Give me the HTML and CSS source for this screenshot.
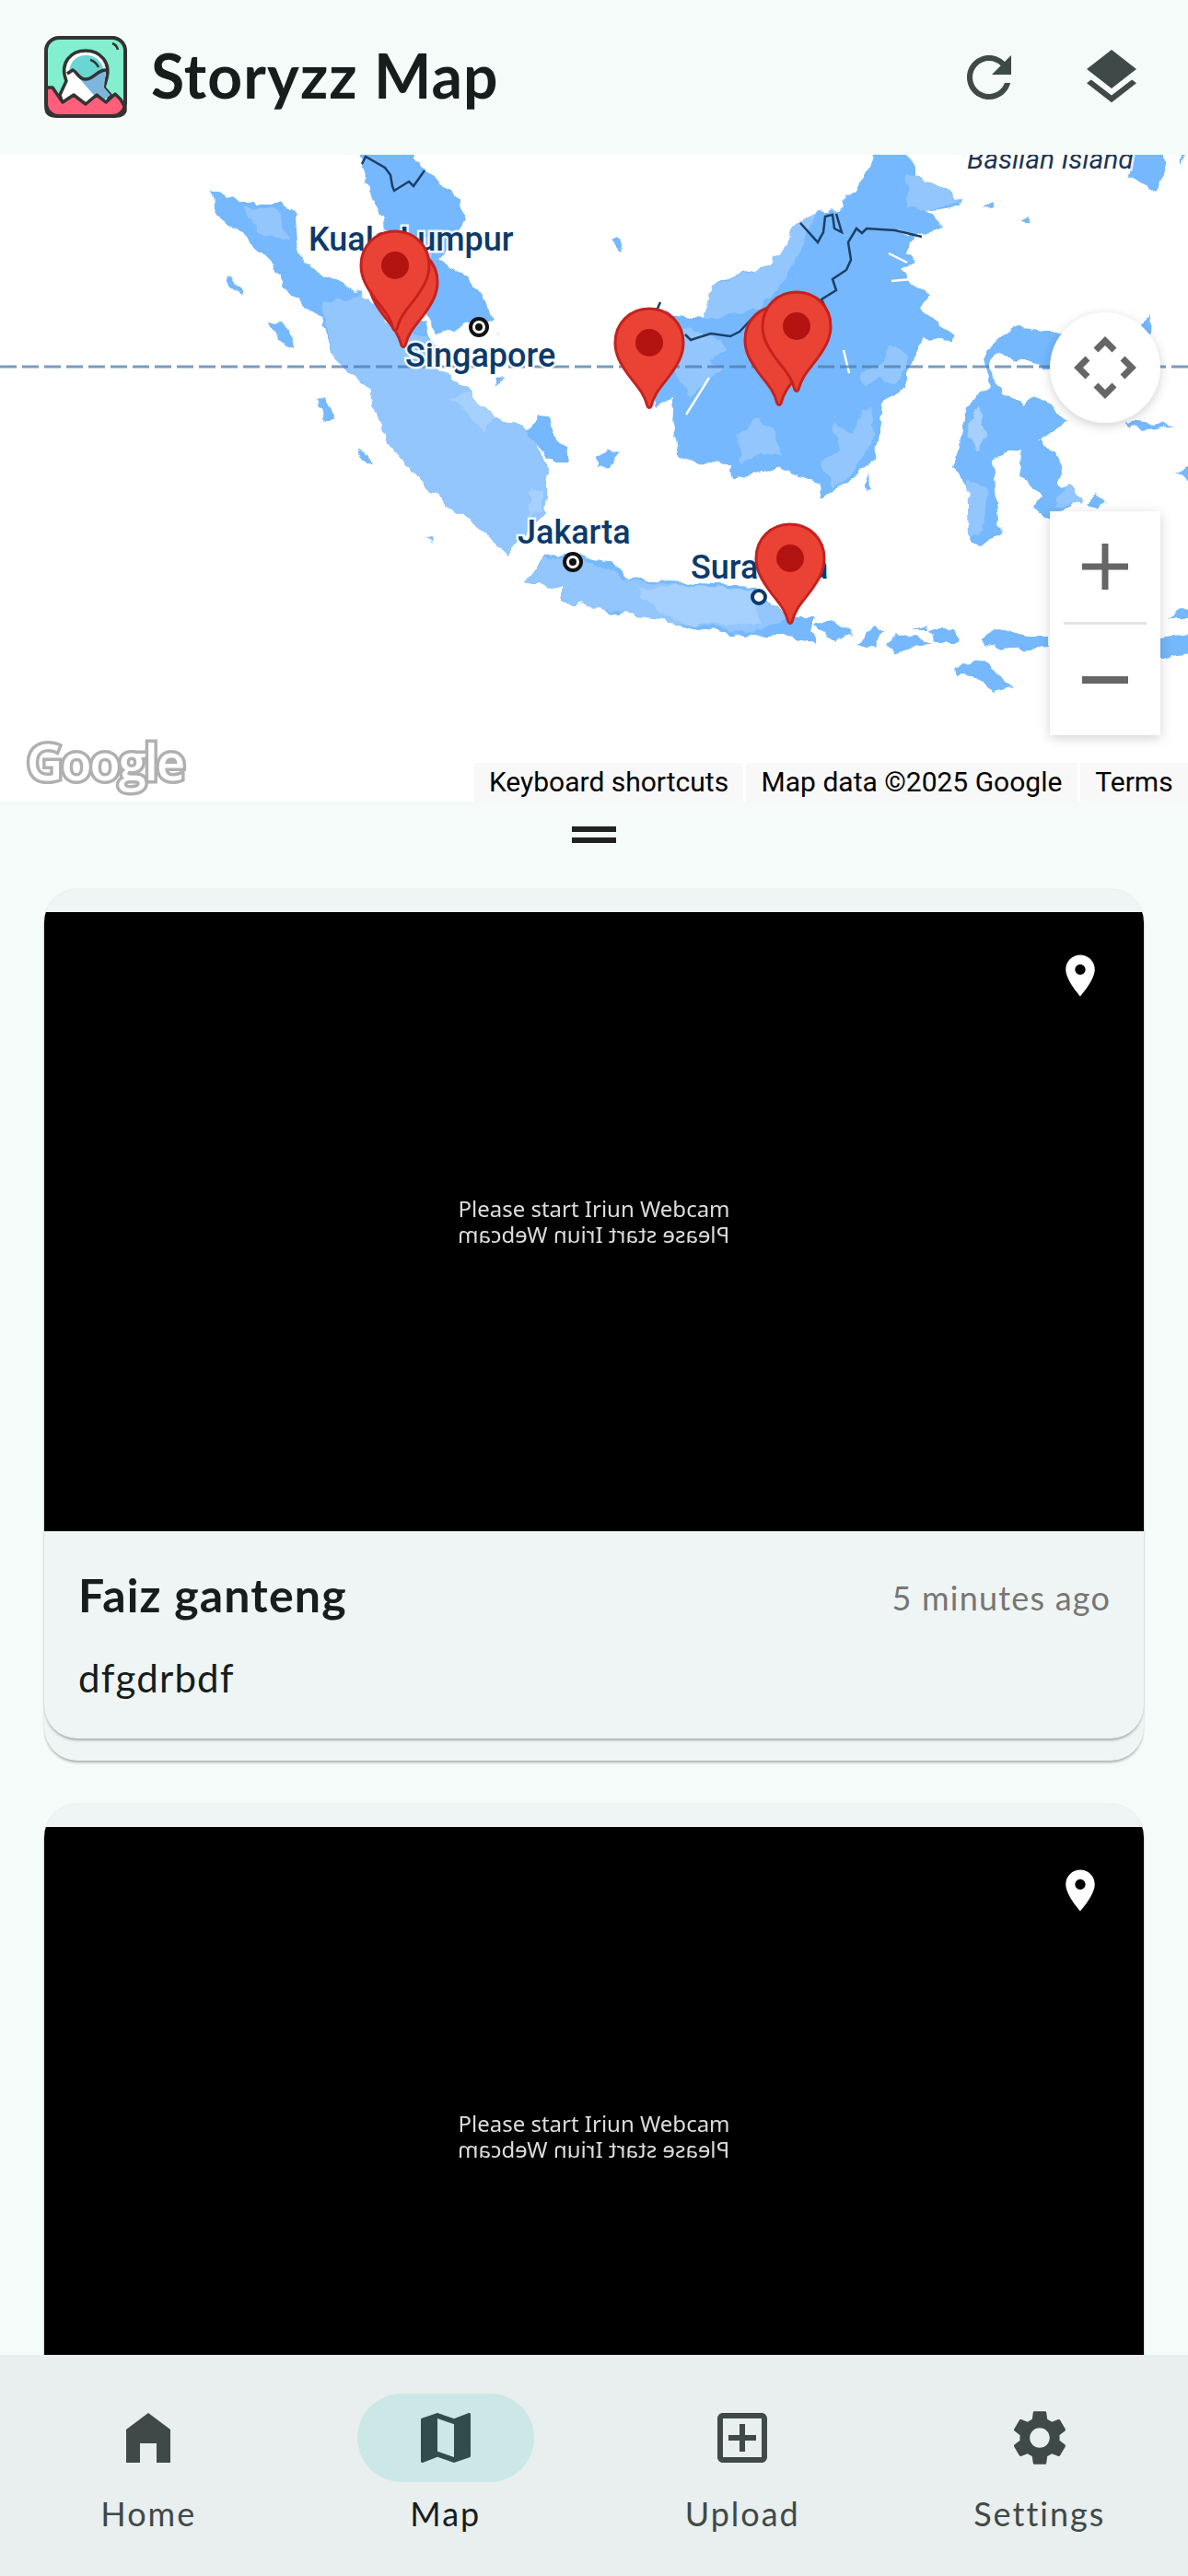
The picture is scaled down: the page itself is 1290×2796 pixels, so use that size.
FILE: index.html
```html
<!DOCTYPE html>
<html lang="en">
<head>
    <meta charset="UTF-8">
    <meta name="viewport" content="width=device-width, initial-scale=1.0">
    <title>Storyzz Map</title>
    <link rel="stylesheet" href="styles.css">
</head>
<body>
    <div class="app">
        <header class="app-bar">
            <svg class="logo" viewBox="0 0 90 90">
                <rect x="2" y="2" width="86" height="85" rx="14" fill="#84efcf"/>
                <path d="M24 49C16 28 30 16 45 16S74 28 67 49L65 56L72 64L67 74H20L17 64Z" fill="#fff" stroke="#333" stroke-width="3.5"/>
                <path d="M27 39C28 27 36 21 45 21C56 21 63 28 65 38C58 38 54 47 45 47C37 47 35 38 31 38Z" fill="#69d6d2"/>
                <path d="M31 38C36 39 37 47 45 47C54 47 58 38 67 38L65 56L72 64L62 72L52 62Z" fill="#7eb5dc"/>
                <path d="M25 41L31 37C36 39 37 47 45 47C54 47 58 36 68 37" fill="none" stroke="#333" stroke-width="3.5"/>
                <path d="M50 26C54 27 57 30 59 34M74 8C77 9 79 11 80 15" fill="none" stroke="#333" stroke-width="2.5"/>
                <path d="M2 56H9L20 72L32 64L45 74L57 64L67 72L77 63L83 69L88 78V80C88 84 84 87 78 87H12C6 87 2 84 2 78Z" fill="#ff5f7a" stroke="#333" stroke-width="3.5" stroke-linejoin="round"/>
                <rect x="2" y="2" width="86" height="85" rx="14" fill="none" stroke="#333" stroke-width="4"/>
            </svg>
            <h1 class="app-title">Storyzz Map</h1>
            <div class="app-actions">
                <svg class="icon" viewBox="0 0 24 24"><path d="M17.65 6.35C16.2 4.9 14.21 4 12 4c-4.42 0-7.99 3.58-7.99 8s3.57 8 7.99 8c3.73 0 6.84-2.55 7.73-6h-2.08c-.82 2.33-3.04 4-5.65 4-3.31 0-6-2.69-6-6s2.69-6 6-6c1.66 0 3.14.69 4.22 1.78L13 11h7V4l-2.35 2.35z"/></svg>
                <svg class="icon" viewBox="0 0 24 24"><path d="M11.99 18.54l-7.37-5.73L3 14.07l9 7 9-7-1.63-1.27-7.38 5.74zM12 16l7.36-5.73L21 9l-9-7-9 7 1.63 1.27L12 16z"/></svg>
            </div>
        </header>

        <section class="map">
            <svg class="map-canvas" viewBox="0 168 1290 702">
                <defs>
                    <g id="pin">
                        <path d="M39 2C18 2 2 18 2 39C2 52 8 62 15 72C24 85 33 92 37 108Q39 111 41 108C45 92 54 85 63 72C70 62 76 52 76 39C76 18 60 2 39 2Z" fill="#ea4335" stroke="#c5221f" stroke-width="3"/>
                        <circle cx="39" cy="39" r="15" fill="#b31412"/>
                    </g>
                    <!-- roughens the hand drawn coast lines -->
                    <filter id="coast" x="-5%" y="-5%" width="110%" height="110%">
                        <feTurbulence type="fractalNoise" baseFrequency="0.07" numOctaves="2" seed="4"/>
                        <feDisplacementMap in="SourceGraphic" scale="11" xChannelSelector="R" yChannelSelector="G"/>
                        <feGaussianBlur stdDeviation="0.5"/>
                    </filter>
                </defs>

                <!-- land, darker shade -->
                <g class="land" filter="url(#coast)">
                    <path d="M228 208L247 212L263 220L304 220L321 233L323 262L329 283L354 300L395 320L428 357L461 347L465 367L480 385L470 395L510 427L539 453L568 463L580 480L588 493L597 510L592 528L588 550L592 557L549 602L527 577L498 557L465 530L440 503L420 480L399 420L362 390L350 343L313 320L296 287L263 253L235 233Z"/>
                    <path d="M387 160H444L461 183L498 217L506 240L477 283L506 300L527 327L533 347L512 352L473 363L463 343L440 320L420 290L416 240L401 207L395 187Z"/>
                    <path d="M245 300L265 315L263 320L245 307Z"/>
                    <path d="M292 350L305 349L319 365L317 378L309 377Z"/>
                    <path d="M344 433L354 430L364 457L354 457Z"/>
                    <path d="M568 467L584 452L597 453L603 480L617 485L619 503L605 503L592 493Z"/>
                    <path d="M389 487L401 497L403 505L392 497Z"/>
                    <path d="M461 580L471 587L469 583Z"/>
                    <path d="M537 358L547 370L540 362Z"/>
                    <path d="M539 413L545 412L539 420Z"/>
                    <path d="M649 497L661 487L672 493L664 507L649 508Z"/>
                    <path d="M664 260L670 257L676 267L672 272Z"/>
                    <path d="M954 160H978L995 180L995 193L1015 200L1044 217L1042 223L1007 230L1024 247L995 255L982 277L993 283L978 293L1007 320L999 337L1036 365L1034 370L1003 368L991 387L982 423L958 437L954 480L947 500L925 520L892 540L888 523L842 507L818 515L797 518L793 503L752 502L735 495L729 460L731 433L711 442L700 400L705 370L719 340L744 343L764 345L775 307L785 302L834 290L867 243L888 230L917 227L915 213L929 207Z"/>
                    <path d="M938 535L945 532L944 510Z"/>
                    <path d="M1100 355L1118 357L1143 363L1170 362L1235 360L1249 343L1248 362L1230 385L1140 400L1081 383L1075 403L1089 427L1110 440L1122 430L1143 440L1159 457L1126 480L1130 480L1151 497L1149 523L1159 530L1174 543L1139 563L1122 553L1130 537L1106 517L1110 487L1079 500L1081 530L1085 580L1065 593L1052 587L1056 560L1052 530L1034 507L1044 480L1050 440L1075 417L1069 390L1073 377Z"/>
                    <path d="M1233 160H1262L1266 190L1255 207L1225 190Z"/>
                    <path d="M1281 160H1286L1285 180Z"/>
                    <path d="M1106 242L1116 236L1118 242Z"/>
                    <path d="M1065 226L1077 216L1079 223Z"/>
                    <path d="M1221 457L1277 462L1237 467Z"/>
                    <path d="M1277 513L1300 503V527Z"/>
                    <path d="M1270 672L1277 662L1300 663V672Z"/>
                    <path d="M1180 545L1192 538L1200 545L1190 552Z"/>
                    <path d="M570 632L592 603L625 600L645 606L666 611L682 628L740 632L818 636L828 648L859 670L884 670L880 683L886 698L855 690L818 690L752 682L719 670L698 666L670 668L645 658L609 654L609 637L576 633Z"/>
                    <path d="M884 677L908 675L925 687L906 697Z"/>
                    <path d="M931 700L947 680L960 685L951 705Z"/>
                    <path d="M962 697L974 687L1013 697L974 710Z"/>
                    <path d="M986 683L1007 678L1015 697L1040 697L1036 683L1011 683Z"/>
                    <path d="M1065 693L1085 682L1114 690L1139 690V702L1102 705L1069 700Z"/>
                    <path d="M1260 693L1300 688V707L1260 715Z"/>
                    <path d="M1038 725L1069 718L1100 745L1077 750L1058 733L1040 732Z"/>
                </g>

                <!-- lighter shades over the land -->
                <g class="land-light" filter="url(#coast)">
                    <path d="M350 330L395 320L428 357L465 367L470 395L510 427L539 453L568 463L580 480L597 510L592 557L549 602L527 577L498 557L465 530L440 503L420 480L399 420L362 390Z"/>
                    <path d="M570 632L592 605L625 603L682 630L740 635L818 640L828 650L859 670L818 687L752 678L670 665L609 652L609 637Z"/>
                    <path d="M775 307L834 290L867 243L888 230L860 290L840 320L820 335L780 345L764 345Z"/>
                    <path d="M735 355L770 362L790 375L772 392L785 400L750 430L735 410Z"/>
                    <path d="M933 405L955 395L966 375L985 385L975 418L955 412L940 420Z"/>
                    <path d="M905 460L925 470L945 440L950 472L930 510L905 530L890 500L912 488Z"/>
                    <path d="M800 470L822 455L840 465L850 495L825 490L805 505Z"/>
                    <path d="M985 190L1015 200L1044 217L1007 230L985 225Z"/>
                    <path d="M1050 520L1072 530L1068 575L1052 585Z"/>
                    <path d="M1148 540L1160 525L1174 543L1150 553Z"/>
                    <path d="M440 260L470 255L470 285L445 295Z"/>
                    <path d="M260 225L300 225L315 260L285 255Z"/>
                </g>
                <g class="land-pale" filter="url(#coast)">
                    <path d="M690 640L740 635L818 640L825 680L752 678L719 667Z"/>
                    <path d="M490 430L510 427L539 453L525 470Z"/>
                    <path d="M575 530L590 535L590 555L575 560Z"/>
                    <path d="M1060 440L1072 470L1062 490L1052 470Z"/>
                </g>
                <path class="rivers" d="M770 410L745 450M916 380L922 405M968 305L990 303M987 255L975 250M985 285L965 275M340 242L355 260M520 300L530 310"/>

                <!-- borders and equator -->
                <path class="border" d="M393 178L397 170L418 182L424 190L426 202L428 207L444 197L449 202L461 185"/>
                <path class="border" d="M869 242L888 263L894 252L896 235L904 233L906 248L914 252L908 232"/>
                <path class="border" d="M1001 257L972 250L941 248L936 253L930 248L921 263L924 282L919 293L904 303L908 315L892 325L896 333"/>
                <path class="border" d="M822 340L803 360L793 365L772 362L750 369L744 363M717 328L713 337"/>
                <path class="equator" d="M0 398H1290"/>

                <!-- place names -->
                <text class="place" x="335" y="272">Kuala Lumpur</text>
                <text class="place" x="440" y="398">Singapore</text>
                <text class="place" x="562" y="590">Jakarta</text>
                <text class="place" x="750" y="628">Surabaya</text>
                <text class="place place-small" x="1050" y="183">Basilan Island</text>

                <circle class="city" cx="520" cy="355" r="9"/>
                <circle class="city-dot" cx="520" cy="355" r="4"/>
                <circle class="city" cx="622" cy="610" r="9"/>
                <circle class="city-dot" cx="622" cy="610" r="4"/>
                <circle class="city-blue" cx="824" cy="648" r="7"/>

                <!-- markers -->
                <use href="#pin" x="399" y="267"/>
                <use href="#pin" x="390" y="249"/>
                <use href="#pin" x="666" y="333"/>
                <use href="#pin" x="807" y="330"/>
                <use href="#pin" x="826" y="315"/>
                <use href="#pin" x="819" y="567"/>
            </svg>

            <span class="google-mark">Google</span>

            <div class="map-button move-control">
                <svg viewBox="0 0 120 120"><path d="M50 41L60 31L70 41M41 50L31 60L41 70M79 50L89 60L79 70M50 79L60 89L70 79" fill="none" stroke="#666" stroke-width="7"/></svg>
            </div>
            <div class="map-button zoom-control">
                <button class="zoom-btn">
                    <svg viewBox="0 0 50 50"><path d="M25 0V50M0 25H50" stroke="#666" stroke-width="7"/></svg>
                </button>
                <div class="zoom-divider"></div>
                <button class="zoom-btn">
                    <svg viewBox="0 0 50 50"><path d="M0 25H50" stroke="#666" stroke-width="8"/></svg>
                </button>
            </div>

            <div class="attribution">
                <span class="attr-item attr-keys">Keyboard shortcuts</span>
                <span class="attr-item attr-data">Map data ©2025 Google</span>
                <span class="attr-item attr-terms">Terms</span>
            </div>
        </section>

        <main class="feed">
            <svg class="drag-handle" viewBox="0 0 24 24"><path d="M20 9H4v2h16V9zM4 15h16v-2H4v2z"/></svg>

            <article class="story">
                <div class="story-inner">
                    <div class="story-photo">
                        <svg class="photo-pin" viewBox="0 0 24 24"><path d="M12 2C8.13 2 5 5.13 5 9c0 5.25 7 13 7 13s7-7.75 7-13c0-3.87-3.13-7-7-7zm0 9.5c-1.38 0-2.5-1.12-2.5-2.5s1.12-2.5 2.5-2.5 2.5 1.12 2.5 2.5-1.12 2.5-2.5 2.5z"/></svg>
                        <p class="webcam-line">Please start Iriun Webcam</p>
                        <p class="webcam-line webcam-mirror">Please start Iriun Webcam</p>
                    </div>
                    <div class="story-body">
                        <div class="story-head">
                            <h2 class="story-name">Faiz ganteng</h2>
                            <span class="story-time">5 minutes ago</span>
                        </div>
                        <p class="story-text">dfgdrbdf</p>
                    </div>
                </div>
            </article>

            <article class="story">
                <div class="story-inner">
                    <div class="story-photo">
                        <svg class="photo-pin" viewBox="0 0 24 24"><path d="M12 2C8.13 2 5 5.13 5 9c0 5.25 7 13 7 13s7-7.75 7-13c0-3.87-3.13-7-7-7zm0 9.5c-1.38 0-2.5-1.12-2.5-2.5s1.12-2.5 2.5-2.5 2.5 1.12 2.5 2.5-1.12 2.5-2.5 2.5z"/></svg>
                        <p class="webcam-line">Please start Iriun Webcam</p>
                        <p class="webcam-line webcam-mirror">Please start Iriun Webcam</p>
                    </div>
                </div>
            </article>
        </main>

        <nav class="bottom-nav">
            <a class="nav-item">
                <span class="nav-pill">
                    <svg class="icon" viewBox="0 0 24 24"><path d="M12 3L4 9v12h5v-7h6v7h5V9z"/></svg>
                </span>
                <span class="nav-label">Home</span>
            </a>
            <a class="nav-item active">
                <span class="nav-pill">
                    <svg class="icon" viewBox="0 0 24 24"><path d="M20.5 3l-.16.03L15 5.1 9 3 3.36 4.9c-.21.07-.36.25-.36.48V20.5c0 .28.22.5.5.5l.16-.03L9 18.9l6 2.1 5.64-1.9c.21-.07.36-.25.36-.48V3.5c0-.28-.22-.5-.5-.5zM15 19l-6-2.11V5l6 2.11V19z"/></svg>
                </span>
                <span class="nav-label">Map</span>
            </a>
            <a class="nav-item">
                <span class="nav-pill">
                    <svg class="icon" viewBox="0 0 24 24"><path d="M19 3H5c-1.11 0-2 .9-2 2v14c0 1.1.89 2 2 2h14c1.1 0 2-.9 2-2V5c0-1.1-.9-2-2-2zm0 16H5V5h14v14zm-8-2h2v-4h4v-2h-4V7h-2v4H7v2h4z"/></svg>
                </span>
                <span class="nav-label">Upload</span>
            </a>
            <a class="nav-item">
                <span class="nav-pill">
                    <svg class="icon" viewBox="0 0 24 24"><path d="M19.14 12.94c.04-.3.06-.61.06-.94 0-.32-.02-.64-.07-.94l2.03-1.58c.18-.14.23-.41.12-.61l-1.92-3.32c-.12-.22-.37-.29-.59-.22l-2.39.96c-.5-.38-1.03-.7-1.62-.94l-.36-2.54c-.04-.24-.24-.41-.48-.41h-3.84c-.24 0-.43.17-.47.41l-.36 2.54c-.59.24-1.13.57-1.62.94l-2.39-.96c-.22-.08-.47 0-.59.22L2.74 8.87c-.12.21-.08.47.12.61l2.03 1.58c-.05.3-.09.63-.09.94s.02.64.07.94l-2.03 1.58c-.18.14-.23.41-.12.61l1.92 3.32c.12.22.37.29.59.22l2.39-.96c.5.38 1.03.7 1.62.94l.36 2.54c.05.24.24.41.48.41h3.84c.24 0 .44-.17.47-.41l.36-2.54c.59-.24 1.13-.56 1.62-.94l2.39.96c.22.08.47 0 .59-.22l1.92-3.32c.12-.22.07-.47-.12-.61l-2.01-1.58zM12 15.6c-1.98 0-3.6-1.62-3.6-3.6s1.62-3.6 3.6-3.6 3.6 1.62 3.6 3.6-1.62 3.6-3.6 3.6z"/></svg>
                </span>
                <span class="nav-label">Settings</span>
            </a>
        </nav>
    </div>
</body>
</html>
```

FILE: styles.css
```css
* {
    box-sizing: border-box;
}

body {
    font-family: Lato, "Noto Sans", sans-serif;
    background-color: #f4fbf9;
    color: #171d1c;
    margin: 0;
    padding: 0;
}

.app {
    display: flex;
    flex-direction: column;
    height: 2796px;
    overflow: hidden;
}

.icon {
    width: 72px;
    height: 72px;
    fill: #3f4948;
    display: block;
}

/* app bar */
.app-bar {
    display: flex;
    align-items: center;
    height: 168px;
    flex-shrink: 0;
    padding-left: 48px;
    background-color: #f4fbf9;
    position: relative;
    z-index: 2;
}

.logo {
    width: 90px;
    height: 90px;
    flex-shrink: 0;
}

.app-title {
    font-size: 66px;
    font-weight: 700;
    margin: 0 0 6px 26px;
    letter-spacing: 1.1px;
}

.app-actions {
    display: flex;
    gap: 61px;
    margin-left: auto;
    margin-right: 47px;
}

/* map */
.map {
    position: relative;
    height: 702px;
    flex-shrink: 0;
    background-color: #fff;
    overflow: hidden;
}

.map-canvas {
    display: block;
    width: 1290px;
    height: 702px;
}

.land {
    fill: #74b8fd;
}

.land-light {
    fill: #93c6fd;
}

.land-pale {
    fill: #a6d0fd;
}

.rivers {
    fill: none;
    stroke: #fff;
    stroke-width: 2.5;
}

.border {
    fill: none;
    stroke: #1d3f66;
    stroke-width: 2.5;
}

.equator {
    fill: none;
    stroke: #4d79ab;
    stroke-opacity: 0.75;
    stroke-width: 3;
    stroke-dasharray: 18 6;
}

.place {
    font-family: Roboto, sans-serif;
    font-size: 36px;
    font-weight: 500;
    fill: #0b3a6b;
    stroke: #fff;
    stroke-width: 5px;
    stroke-opacity: 0.85;
    paint-order: stroke;
}

.place-small {
    font-size: 30px;
    font-weight: 400;
    fill: #1d3553;
    font-style: italic;
}

.city {
    fill: #fff;
    stroke: #111;
    stroke-width: 4;
}

.city-dot {
    fill: #111;
}

.city-blue {
    fill: #fff;
    stroke: #0b3a6b;
    stroke-width: 4;
}

.google-mark {
    position: absolute;
    left: 29px;
    bottom: 13px;
    font-family: "Open Sans", sans-serif;
    font-size: 54px;
    font-weight: 600;
    letter-spacing: -1.8px;
    line-height: 62px;
    color: #fff;
    -webkit-text-stroke: 7px #b0b0b0;
    paint-order: stroke fill;
}

.map-button {
    position: absolute;
    right: 30px;
    width: 120px;
    background-color: #fff;
    box-shadow: 0 3px 12px rgba(0, 0, 0, 0.18);
}

.map-button svg {
    display: block;
}

.move-control {
    top: 171px;
    height: 120px;
    border-radius: 50%;
}

.zoom-control {
    top: 387px;
    height: 243px;
    display: flex;
    flex-direction: column;
    align-items: center;
}

.zoom-btn {
    flex: 1;
    width: 100%;
    display: flex;
    align-items: center;
    justify-content: center;
    padding: 0;
    border: none;
    background: none;
}

.zoom-btn svg {
    width: 50px;
    height: 50px;
}

.zoom-divider {
    width: 90px;
    height: 3px;
    background-color: #e3e3e3;
}

.attribution {
    position: absolute;
    right: 0;
    bottom: 0;
    display: flex;
    gap: 3px;
    height: 42px;
    font-family: Roboto, sans-serif;
    font-size: 30px;
    color: #000;
}

.attr-item {
    background-color: #f8f8f8;
    display: flex;
    align-items: center;
    justify-content: center;
    white-space: nowrap;
    padding-bottom: 2px;
}

.attr-keys {
    width: 292px;
}

.attr-data {
    width: 360px;
}

.attr-terms {
    width: 117px;
}

/* story list */
.feed {
    flex: 1;
    min-height: 0;
    overflow: hidden;
    display: flex;
    flex-direction: column;
    align-items: center;
    padding: 0 48px;
}

.drag-handle {
    width: 72px;
    height: 72px;
    flex-shrink: 0;
    fill: #222;
    margin-bottom: 23px;
}

.story {
    width: 100%;
    flex-shrink: 0;
    background-color: #eff5f4;
    border-radius: 36px;
    box-shadow: 0 3px 3px -1px rgba(0, 0, 0, 0.3), 0 0 2px rgba(0, 0, 0, 0.06);
    padding-bottom: 24px;
    margin-bottom: 47px;
}

.story-inner {
    background-color: #eff5f4;
    border-radius: 36px;
    box-shadow: 0 3px 3px -1px rgba(0, 0, 0, 0.3), 0 0 2px rgba(0, 0, 0, 0.06);
    padding-top: 25px;
    overflow: hidden;
}

.story-photo {
    position: relative;
    height: 672px;
    background-color: #000;
    display: flex;
    flex-direction: column;
    align-items: center;
    justify-content: center;
    font-family: "Noto Sans", sans-serif;
    font-size: 24px;
    color: #ddd;
}

.photo-pin {
    position: absolute;
    top: 42px;
    right: 42px;
    width: 54px;
    height: 54px;
    fill: #fff;
}

.webcam-line {
    margin: 0;
    line-height: 28px;
    filter: blur(0.4px);
}

.webcam-mirror {
    transform: scaleX(-1);
}

.story-body {
    padding: 39px 36px 0 37px;
    height: 225px;
}

.story-head {
    display: flex;
    justify-content: space-between;
    align-items: baseline;
}

.story-name {
    font-size: 50px;
    font-weight: 700;
    margin: 0;
    letter-spacing: 1.2px;
}

.story-time {
    font-size: 36px;
    color: #767676;
    letter-spacing: 1.2px;
    position: relative;
    top: -2px;
}

.story-text {
    font-size: 42px;
    margin: 35px 0 0;
    letter-spacing: 1.2px;
}

/* bottom navigation */
.bottom-nav {
    display: grid;
    grid-template-columns: repeat(4, 1fr);
    height: 240px;
    flex-shrink: 0;
    padding-top: 42px;
    background-color: #e9efee;
}

.nav-item {
    display: flex;
    flex-direction: column;
    align-items: center;
    color: #3f4948;
}

.nav-pill {
    display: flex;
    justify-content: center;
    align-items: center;
    width: 192px;
    height: 96px;
    border-radius: 48px;
}

.nav-label {
    font-size: 36px;
    font-weight: 400;
    letter-spacing: 2px;
    line-height: 48px;
    margin-top: 10px;
}

.nav-item.active {
    color: #171d1c;
}

.nav-item.active .nav-pill {
    background-color: #cce8e6;
}

.nav-item.active .icon {
    fill: #324b4d;
}
```
